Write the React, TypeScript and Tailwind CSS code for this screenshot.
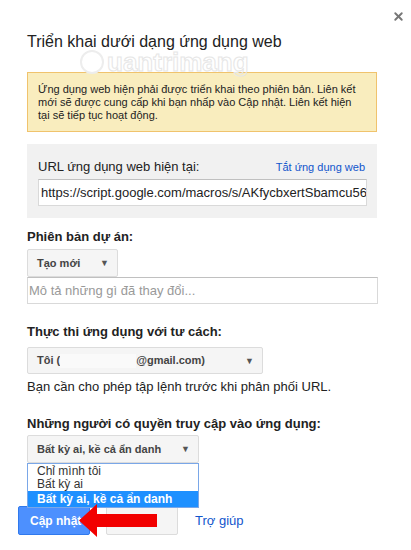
import React from 'react';
import { X } from 'lucide-react';

const Caret = () => <span className="text-[9px] text-[#555] leading-none">▼</span>;

const DeployDialog: React.FC = () => {
    return (
        <div className="relative w-[411px] h-[550px] bg-white overflow-hidden font-['Liberation_Sans',Arial,sans-serif] text-[#222]">
            <button className="absolute top-[10px] left-[392px] text-[#777]">
                <X size={13} strokeWidth={3.5} />
            </button>

            {/* watermark */}
            <div className="absolute left-[80px] top-[50px] flex items-center gap-[3px] pointer-events-none">
                <div className="w-[24px] h-[24px] rounded-full border-2 border-[#ededed]" />
                <span className="text-[26px] font-bold leading-[22px] text-transparent [-webkit-text-stroke:1px_#e6e6e6]">uantrimang</span>
            </div>

            <div className="pl-[27px] pr-[34px] pt-[32px]">
                <h1 className="text-[16px] leading-[20px]">Triển khai dưới dạng ứng dụng web</h1>

                <div className="mt-[20px] h-[60px] bg-[#f9edbe] border border-[#f0c36d] px-[10px] pt-[10px] text-[11px] leading-[13px]">
                    Ứng dụng web hiện phải được triển khai theo phiên bản. Liên kết mới sẽ được cung cấp khi bạn nhấp vào Cập nhật. Liên kết hiện tại sẽ tiếp tục hoạt động.
                </div>

                <div className="mt-[12px] h-[74px] bg-[#f1f1f1] pl-[11px] pr-[10px] pt-[15px]">
                    <div className="flex justify-between items-center h-[16px]">
                        <span className="text-[13px]">URL ứng dụng web hiện tại:</span>
                        <a className="text-[11px] text-[#15c] pr-[2px]">Tắt ứng dụng web</a>
                    </div>
                    <div className="mt-[4px] h-[27px] bg-white border border-[#d9d9d9] border-t-[#c0c0c0] pl-[2px] flex items-center overflow-hidden whitespace-nowrap text-[13px]">
                        https://script.google.com/macros/s/AKfycbxertSbamcu56
                    </div>
                </div>

                <p className="mt-[11px] text-[13px] leading-[16px] font-bold">Phiên bản dự án:</p>
                <div className="mt-[4px] w-[91px] h-[28px] bg-[#f5f5f5] border border-[#dcdcdc] rounded-[2px] flex items-center justify-between pl-[9px] pr-[8px] text-[11px] font-bold text-[#444]">
                    <span>Tạo mới</span>
                    <Caret />
                </div>
                <div className="w-[351px] h-[27px] border border-[#d9d9d9] border-t-[#c0c0c0] flex items-center pl-[1px] text-[13px] text-[#999]">
                    Mô tả những gì đã thay đổi...
                </div>

                <p className="mt-[20px] text-[13px] leading-[16px] font-bold">Thực thi ứng dụng với tư cách:</p>
                <div className="mt-[7px] w-[236px] h-[27px] bg-[#f5f5f5] border border-[#dcdcdc] rounded-[2px] flex items-center pl-[9px] pr-[8px] text-[11px] font-bold text-[#444]">
                    <span>Tôi (</span>
                    <span className="w-[76px] h-[14px] bg-[#fafafa]" />
                    <span>@gmail.com)</span>
                    <span className="ml-auto"><Caret /></span>
                </div>
                <p className="mt-[5px] text-[13px] leading-[16px]">Bạn cần cho phép tập lệnh trước khi phân phối URL.</p>

                <p className="mt-[21px] text-[13px] leading-[16px] font-bold">Những người có quyền truy cập vào ứng dụng:</p>
                <div className="relative mt-[3px]">
                    <div className="w-[172px] h-[28px] bg-[#f5f5f5] border border-[#dcdcdc] rounded-[2px] flex items-center justify-between pl-[9px] pr-[8px] text-[11px] font-bold text-[#444]">
                        <span>Bất kỳ ai, kề cả ẩn danh</span>
                        <Caret />
                    </div>

                    <div className="mt-[43px] flex items-center -ml-[9px]">
                        <button className="w-[72px] h-[29px] bg-[#4d90fe] border border-[#3079ed] rounded-[2px] text-white text-[12px] font-bold text-left pl-[11px]">
                            Cập nhật
                        </button>
                        <button className="ml-[16px] w-[72px] h-[29px] bg-[#f5f5f5] border border-[#dcdcdc] rounded-[2px]" />
                        <a className="ml-[17px] text-[13px] text-[#15c]">Trợ giúp</a>
                    </div>

                    <ul className="absolute left-0 top-[28px] w-[172px] h-[45px] bg-white border border-[#7aa7e8] pt-[1px] text-[12px] text-[#333] z-10">
                        <li className="h-[13px] leading-[13px] pl-[9px]">Chỉ mình tôi</li>
                        <li className="h-[13px] leading-[13px] pl-[9px]">Bất kỳ ai</li>
                        <li className="h-[16px] leading-[16px] pl-[9px] bg-[#1e90ff] text-white font-bold">Bất kỳ ai, kề cả ẩn danh</li>
                    </ul>
                </div>
            </div>

            <svg className="absolute left-[79px] top-[504px] z-20" width="79" height="34" viewBox="0 0 79 34">
                <polygon points="0,16.5 18,0 18,10 78,10 78,23 18,23 18,33" fill="#f20000" />
            </svg>
        </div>
    );
};

export default function App() {
    return <DeployDialog />;
}
